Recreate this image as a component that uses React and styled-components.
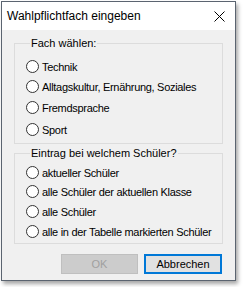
import React from "react";
import styled, { createGlobalStyle } from "styled-components";

const Global = createGlobalStyle`
  html, body { margin: 0; padding: 0; background: #ffffff; }
  body { font-family: "Liberation Sans", Arial, sans-serif; }
`;

const Page = styled.div`
  padding: 1px 0 0 1px;
  width: 244px;
  height: 287px;
  box-sizing: border-box;
`;

const Window = styled.div`
  width: 235px;
  height: 280px;
  box-sizing: border-box;
  border: 1px solid #5b6470;
  background: #f0f0f0;
  box-shadow: 2px 3px 4px rgba(0, 0, 0, 0.35);
  display: flex;
  flex-direction: column;
`;

const TitleBar = styled.div`
  height: 28px;
  background: #ffffff;
  display: flex;
  align-items: center;
  justify-content: space-between;
  padding: 0 10px 0 5px;
  flex-shrink: 0;
`;

const Title = styled.span`
  font-size: 12px;
  color: #000;
  margin-top: -1px;
`;

const Close = styled.svg`
  width: 11px;
  height: 11px;
`;

const Body = styled.div`
  flex: 1;
  display: flex;
  flex-direction: column;
  padding: 7px 0 0 12px;
`;

const Group = styled.fieldset`
  margin: ${(p) => p.$mt || 0}px 0 0 0;
  padding: 0 0 0 11px;
  width: 209px;
  height: ${(p) => p.$h}px;
  box-sizing: border-box;
  border: 1px solid #dcdcdc;
  display: flex;
  flex-direction: column;
  min-width: 0;
`;

const Legend = styled.legend`
  font-size: 11px;
  line-height: 13px;
  color: #000;
  padding: 0 1px;
  margin-left: 4px;
`;

const Row = styled.label`
  display: flex;
  align-items: center;
  height: 15px;
  margin-top: ${(p) => p.$mt}px;
  font-size: 11px;
  letter-spacing: -0.3px;
  color: #000;
  white-space: nowrap;
`;

const Circle = styled.span`
  width: 13px;
  height: 13px;
  box-sizing: border-box;
  border: 1px solid #333333;
  border-radius: 50%;
  background: #ffffff;
  margin-right: 3px;
  flex-shrink: 0;
`;

const Buttons = styled.div`
  display: flex;
  gap: 6px;
  margin: 10px 0 0 47px;
`;

const Button = styled.div`
  width: ${(p) => p.$w}px;
  height: 20px;
  box-sizing: border-box;
  display: flex;
  align-items: center;
  justify-content: center;
  font-size: 11px;
  border: 1px solid ${(p) => (p.$disabled ? "#bfbfbf" : "#0078d7")};
  background: ${(p) => (p.$disabled ? "#cccccc" : "#e1e1e1")};
  color: ${(p) => (p.$disabled ? "#a0a0a0" : "#000")};
  box-shadow: ${(p) => (p.$disabled ? "none" : "inset 0 0 0 1px #0078d7")};
`;

const Radio = ({ label, mt }) => (
  <Row $mt={mt}>
    <Circle />
    {label}
  </Row>
);

export default function App() {
  return (
    <>
      <Global />
      <Page>
        <Window>
          <TitleBar>
            <Title>Wahlpflichtfach eingeben</Title>
            <Close viewBox="0 0 11 11">
              <path d="M0.5 0.5 L10.5 10.5 M10.5 0.5 L0.5 10.5" stroke="#000" strokeWidth="1" fill="none" />
            </Close>
          </TitleBar>
          <Body>
            <Group $h={107}>
              <Legend>Fach wählen:</Legend>
              <Radio label="Technik" mt={9} />
              <Radio label="Alltagskultur, Ernährung, Soziales" mt={5} />
              <Radio label="Fremdsprache" mt={6} />
              <Radio label="Sport" mt={7} />
            </Group>
            <Group $h={97} $mt={3}>
              <Legend>Eintrag bei welchem Schüler?</Legend>
              <Radio label="aktueller Schüler" mt={5} />
              <Radio label="alle Schüler der aktuellen Klasse" mt={4} />
              <Radio label="alle Schüler" mt={5} />
              <Radio label="alle in der Tabelle markierten Schüler" mt={5} />
            </Group>
            <Buttons>
              <Button $w={77} $disabled>OK</Button>
              <Button $w={78}>Abbrechen</Button>
            </Buttons>
          </Body>
        </Window>
      </Page>
    </>
  );
}
